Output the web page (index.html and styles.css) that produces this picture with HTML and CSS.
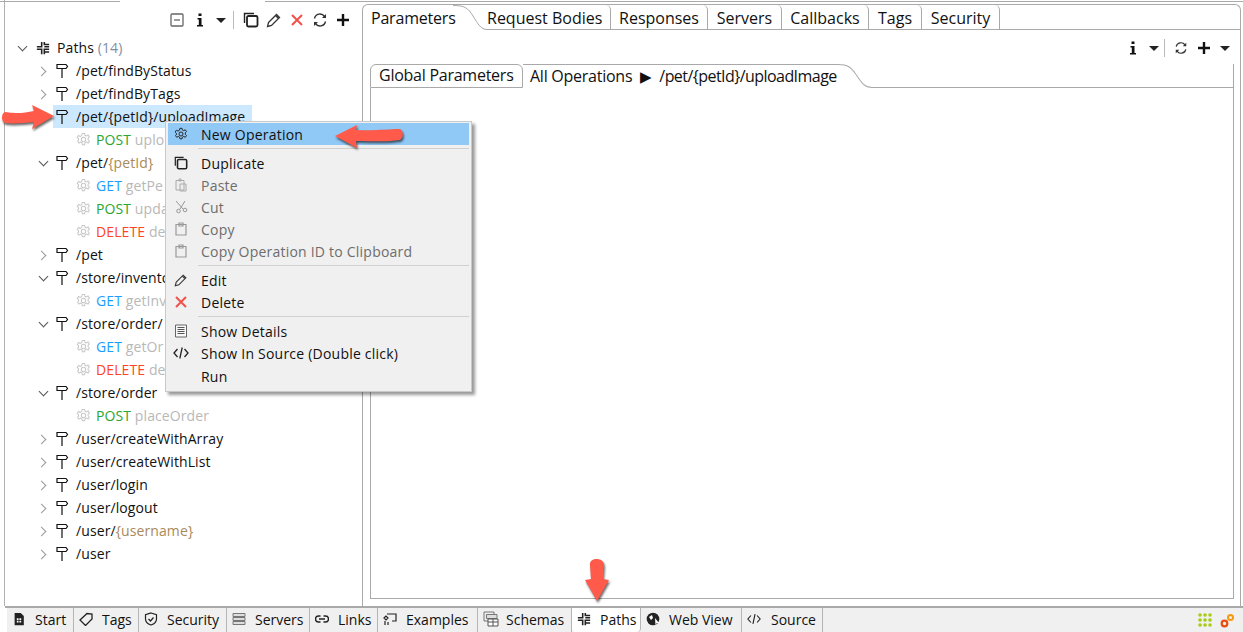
FILE: index.html
```html
<!DOCTYPE html>
<html lang="en">
<head>
<meta charset="utf-8">
<title>Paths</title>
<link rel="stylesheet" href="styles.css">
</head>
<body>
<svg class="defs" width="0" height="0" aria-hidden="true">
  <defs>
    <symbol id="sign" viewBox="0 0 14 16"><path d="M2 1.500h9l1.500 2-1.500 2H2zM7 5.500v9.500" fill="none" stroke="#111" stroke-width="1.200"/></symbol>
    <symbol id="gear" viewBox="0 0 16 16"><path d="M6.800 1.500h2.400l.4 2 1.500.7 1.800-1 1.400 2-1.400 1.400v1.800l1.400 1.400-1.400 2-1.800-1-1.500.7-.4 2H6.800l-.4-2-1.500-.7-1.800 1-1.400-2L2.700 8.900V7.100L1.300 5.700l1.400-2 1.800 1 1.500-.7z" fill="none" stroke="currentColor" stroke-width="1.100"/><circle cx="8" cy="8" r="2.300" fill="none" stroke="currentColor" stroke-width="1.100"/></symbol>
    <symbol id="copy" viewBox="0 0 16 16"><path d="M1.500 11V1.500H11" fill="none" stroke="#222" stroke-width="1.400"/><rect x="4" y="4" width="10.500" height="10.500" rx="1.500" fill="none" stroke="#222" stroke-width="1.800"/></symbol>
    <symbol id="pencil" viewBox="0 0 16 16"><path d="M2.500 10.500l8-8 3 3-8 8-4 1zM9.500 3.500l3 3" fill="none" stroke="#333" stroke-width="1.300"/></symbol>
    <symbol id="cross" viewBox="0 0 14 14"><path d="M2 2l10 10M12 2L2 12" fill="none" stroke="#f0524a" stroke-width="2"/></symbol>
    <symbol id="sync" viewBox="0 0 16 16"><path d="M2.500 6.500A5.500 5.500 0 0 1 12.500 4.500M13.500 9.500A5.500 5.500 0 0 1 3.500 11.500" fill="none" stroke="#333" stroke-width="1.400"/><path d="M14 2v4h-4zM2 14v-4h4z" fill="#333"/></symbol>
    <symbol id="plus" viewBox="0 0 14 14"><path d="M7 1v12M1 7h12" fill="none" stroke="#111" stroke-width="2.400"/></symbol>
    <symbol id="info" viewBox="0 0 8 14"><path d="M2.500 0.500h3v2.500h-3zM1.500 5h4v7h1.500v1.500H1v-1.500h1.800V6.500H1.500z" fill="#111"/></symbol>
    <symbol id="paths" viewBox="0 0 16 16"><path d="M6.500 1v5.500H1M9.500 1v3h5.500M9.500 6.500H15M1 9.500h5.500V15M9.500 15V9.500H15M15 12.500H9.500" fill="none" stroke="#222" stroke-width="1.800"/></symbol>
    <symbol id="code" viewBox="0 0 16 12"><path d="M4.500 2L1 6l3.500 4M11.500 2L15 6l-3.500 4M9.200 .5L6.800 11.500" fill="none" stroke="#222" stroke-width="1.300"/></symbol>
  </defs>
</svg>

<div class="edge-top"></div>
<div class="app">
  <div class="main">
    <section class="left">
      <div class="toolbar left-tools">
        <svg class="ic ic14" viewBox="0 0 14 14"><rect x="1" y="1" width="12" height="12" rx="1" fill="none" stroke="#666" stroke-width="1.300"/><path d="M4 7h6" stroke="#666" stroke-width="1.300"/></svg>
        <svg class="ic info"><use href="#info"/></svg>
        <span class="caret"></span>
        <span class="vsep"></span>
        <svg class="ic ic16"><use href="#copy"/></svg>
        <svg class="ic ic16"><use href="#pencil"/></svg>
        <svg class="ic ic14"><use href="#cross"/></svg>
        <svg class="ic ic16"><use href="#sync"/></svg>
        <svg class="ic ic14"><use href="#plus"/></svg>
      </div>
      <ul class="tree">
        <li class="row l0"><span class="chev down"></span><span class="node"><svg class="ic ic14"><use href="#paths"/></svg><span>Paths <span class="count">(14)</span></span></span></li>
        <li class="row l1"><span class="chev closed"></span><span class="node"><svg class="ic sign"><use href="#sign"/></svg><span>/pet/findByStatus</span></span></li>
        <li class="row l1"><span class="chev closed"></span><span class="node"><svg class="ic sign"><use href="#sign"/></svg><span>/pet/findByTags</span></span></li>
        <li class="row l1"><span class="chev"></span><span class="node selected"><svg class="ic sign"><use href="#sign"/></svg><span>/pet/{petId}/uploadImage</span></span></li>
        <li class="row l2"><span class="node"><svg class="ic gear"><use href="#gear"/></svg><span><span class="post">POST</span> <span class="op">uplo</span></span></span></li>
        <li class="row l1"><span class="chev down"></span><span class="node"><svg class="ic sign"><use href="#sign"/></svg><span>/pet/<span class="param">{petId}</span></span></span></li>
        <li class="row l2"><span class="node"><svg class="ic gear"><use href="#gear"/></svg><span><span class="get">GET</span> <span class="op">getPe</span></span></span></li>
        <li class="row l2"><span class="node"><svg class="ic gear"><use href="#gear"/></svg><span><span class="post">POST</span> <span class="op">upda</span></span></span></li>
        <li class="row l2"><span class="node"><svg class="ic gear"><use href="#gear"/></svg><span><span class="delete">DELETE</span> <span class="op">de</span></span></span></li>
        <li class="row l1"><span class="chev closed"></span><span class="node"><svg class="ic sign"><use href="#sign"/></svg><span>/pet</span></span></li>
        <li class="row l1"><span class="chev down"></span><span class="node"><svg class="ic sign"><use href="#sign"/></svg><span>/store/invento</span></span></li>
        <li class="row l2"><span class="node"><svg class="ic gear"><use href="#gear"/></svg><span><span class="get">GET</span> <span class="op">getInv</span></span></span></li>
        <li class="row l1"><span class="chev down"></span><span class="node"><svg class="ic sign"><use href="#sign"/></svg><span>/store/order/</span></span></li>
        <li class="row l2"><span class="node"><svg class="ic gear"><use href="#gear"/></svg><span><span class="get">GET</span> <span class="op">getOr</span></span></span></li>
        <li class="row l2"><span class="node"><svg class="ic gear"><use href="#gear"/></svg><span><span class="delete">DELETE</span> <span class="op">de</span></span></span></li>
        <li class="row l1"><span class="chev down"></span><span class="node"><svg class="ic sign"><use href="#sign"/></svg><span>/store/order</span></span></li>
        <li class="row l2"><span class="node"><svg class="ic gear"><use href="#gear"/></svg><span><span class="post">POST</span> <span class="op">placeOrder</span></span></span></li>
        <li class="row l1"><span class="chev closed"></span><span class="node"><svg class="ic sign"><use href="#sign"/></svg><span>/user/createWithArray</span></span></li>
        <li class="row l1"><span class="chev closed"></span><span class="node"><svg class="ic sign"><use href="#sign"/></svg><span>/user/createWithList</span></span></li>
        <li class="row l1"><span class="chev closed"></span><span class="node"><svg class="ic sign"><use href="#sign"/></svg><span>/user/login</span></span></li>
        <li class="row l1"><span class="chev closed"></span><span class="node"><svg class="ic sign"><use href="#sign"/></svg><span>/user/logout</span></span></li>
        <li class="row l1"><span class="chev closed"></span><span class="node"><svg class="ic sign"><use href="#sign"/></svg><span>/user/<span class="param">{username}</span></span></span></li>
        <li class="row l1"><span class="chev closed"></span><span class="node"><svg class="ic sign"><use href="#sign"/></svg><span>/user</span></span></li>
      </ul>
    </section>

    <section class="pane">
      <div class="tabs outer-tabs">
        <span class="tab active t-params">Parameters</span>
        <svg class="curve c-outer" viewBox="0 0 34 25" preserveAspectRatio="none"><path d="M0 .5C12 .5 15 3 20 11S28 24.500 34 24.500" fill="none" stroke="#a9a9a9"/></svg>
        <span class="tab t-req">Request Bodies</span>
        <span class="tab t-resp">Responses</span>
        <span class="tab t-serv">Servers</span>
        <span class="tab t-call">Callbacks</span>
        <span class="tab t-tags">Tags</span>
        <span class="tab t-sec">Security</span>
        <span class="tab-fill"></span>
      </div>
      <div class="toolbar right-tools">
        <svg class="ic info"><use href="#info"/></svg>
        <span class="caret"></span>
        <span class="vsep"></span>
        <svg class="ic ic14"><use href="#sync"/></svg>
        <svg class="ic ic14"><use href="#plus"/></svg>
        <span class="caret"></span>
      </div>
      <div class="inner">
        <div class="inner-tabs">
          <span class="itab">Global Parameters</span>
          <span class="itab active">All Operations<span class="tri">&#9654;</span><span class="crumb">/pet/{petId}/uploadImage</span></span>
          <svg class="curve c-inner" viewBox="0 0 34 23" preserveAspectRatio="none"><path d="M0 .5C10 .5 13 3 18 10S26 22.500 34 22.500" fill="none" stroke="#a9a9a9"/></svg>
          <span class="itab-fill"></span>
        </div>
        <div class="inner-body"></div>
      </div>
    </section>
  </div>

  <nav class="bottom">
    <span class="btab b-start"><svg class="ic ic14" viewBox="0 0 14 16"><path d="M2 1h7l3.500 3.500V15H2z" fill="#222"/><path d="M4.500 7h2v2h-2zM7.500 7h2v2h-2zM4.500 10h2v2h-2zM7.500 10h2v2h-2z" fill="#fff"/></svg>Start</span>
    <span class="btab b-tags"><svg class="ic ic14" viewBox="0 0 14 14"><path d="M1 8l7-6.500 5 .5v5l-6.500 6.500z" fill="none" stroke="#222" stroke-width="1.300"/></svg>Tags</span>
    <span class="btab b-sec"><svg class="ic ic14" viewBox="0 0 14 14"><path d="M7 1l5.500 1.800V7c0 3-2.500 5-5.500 6-3-1-5.500-3-5.500-6V2.800z" fill="none" stroke="#222" stroke-width="1.200"/><path d="M4.500 7l2 2 3-3.500" fill="none" stroke="#222" stroke-width="1.200"/></svg>Security</span>
    <span class="btab b-serv"><svg class="ic ic14" viewBox="0 0 14 14"><path d="M1 1.500h12v3H1zM1 5.500h12v3H1zM1 9.500h12v3H1z" fill="#ddd" stroke="#777"/></svg>Servers</span>
    <span class="btab b-links"><svg class="ic ic14" viewBox="0 0 14 14"><path d="M5.500 4H3.500a3 3 0 0 0 0 6h2M8.500 4h2a3 3 0 0 1 0 6h-2M4 7h6" fill="none" stroke="#222" stroke-width="1.400"/></svg>Links</span>
    <span class="btab b-ex"><svg class="ic ic14" viewBox="0 0 14 14"><path d="M4 2h9v7H9M1 6l2-2 2 2-2 2zM2 9v4M5 10v3" fill="none" stroke="#222" stroke-width="1.200"/></svg>Examples</span>
    <span class="btab b-sch"><svg class="ic ic16b" viewBox="0 0 16 16"><path d="M1 1h10v9H1z" fill="#eee" stroke="#777"/><path d="M3.500 3.500H14v4H3.500z" fill="#ddd" stroke="#777"/><path d="M5 8h10v7H5zM5 11h10M10 8v7" fill="#fff" stroke="#555"/></svg>Schemas</span>
    <span class="btab b-paths on"><svg class="ic ic14"><use href="#paths"/></svg>Paths</span>
    <span class="btab b-web"><svg class="ic ic14" viewBox="0 0 14 14"><circle cx="7" cy="7" r="6.300" fill="#222"/><path d="M3 5l3-2 1 3-2 2zM9 6l4 5-2.500.3-1 2z" fill="#fff"/></svg>Web View</span>
    <span class="btab b-src"><svg class="ic ic14" viewBox="0 0 16 12"><use href="#code"/></svg>Source</span>
    <span class="status">
      <svg class="ic dots" viewBox="0 0 14 14"><g fill="#a6cc12"><circle cx="2" cy="2" r="1.800"/><circle cx="7" cy="2" r="1.800"/><circle cx="12" cy="2" r="1.800"/><circle cx="2" cy="7" r="1.800"/><circle cx="7" cy="7" r="1.800"/><circle cx="12" cy="7" r="1.800"/><circle cx="2" cy="12" r="1.800"/><circle cx="7" cy="12" r="1.800"/><circle cx="12" cy="12" r="1.800"/></g></svg>
      <svg class="ic gears" viewBox="0 0 15 15"><circle cx="10.500" cy="4.500" r="2.500" fill="none" stroke="#f59a10" stroke-width="2"/><circle cx="4.500" cy="10.500" r="2.800" fill="none" stroke="#e8500f" stroke-width="2.200"/></svg>
    </span>
  </nav>
</div>

<div class="menu">
  <div class="mi hot"><svg class="ic ic14 dark"><use href="#gear"/></svg>New Operation</div>
  <div class="msep"></div>
  <div class="mi"><svg class="ic ic14"><use href="#copy"/></svg>Duplicate</div>
  <div class="mi off"><svg class="ic ic14" viewBox="0 0 14 14"><path d="M2 2.500h8V12H2zM5 1h2v2H5zM6 6h6v7H6z" fill="#eee" stroke="#aaa"/></svg>Paste</div>
  <div class="mi off"><svg class="ic ic14" viewBox="0 0 14 14"><path d="M2 1l7 8M11 1L6 9" fill="none" stroke="#999"/><circle cx="4.500" cy="11" r="1.800" fill="none" stroke="#999"/><circle cx="11" cy="10" r="1.800" fill="none" stroke="#999"/></svg>Cut</div>
  <div class="mi off"><svg class="ic ic14" viewBox="0 0 14 14"><path d="M2 2.500h10V13H2zM5 1h4v3H5z" fill="none" stroke="#999" stroke-width="1.200"/></svg>Copy</div>
  <div class="mi off"><svg class="ic ic14" viewBox="0 0 14 14"><path d="M2 2.500h10V13H2zM5 1h4v3H5z" fill="none" stroke="#999" stroke-width="1.200"/></svg>Copy Operation ID to Clipboard</div>
  <div class="msep"></div>
  <div class="mi"><svg class="ic ic14"><use href="#pencil"/></svg>Edit</div>
  <div class="mi"><svg class="ic ic14"><use href="#cross"/></svg>Delete</div>
  <div class="msep"></div>
  <div class="mi"><svg class="ic ic14" viewBox="0 0 14 14"><path d="M1.500 1h11v12h-11z" fill="#f8f8f8" stroke="#666"/><path d="M3.500 3.500h7M3.500 5.500h7M3.500 7.500h7M3.500 9.500h7" stroke="#555"/></svg>Show Details</div>
  <div class="mi"><svg class="ic wide" viewBox="0 0 16 12"><use href="#code"/></svg>Show In Source (Double click)</div>
  <div class="mi tall"><span class="noicon"></span>Run</div>
</div>

<svg class="arrow a1" viewBox="0 0 56 28"><path d="M4 9C14 11 24 10 33 8L31 2 53 13 31 26 33 19C24 20 12 21 4 20 0 19 0 10 4 9z"/></svg>
<svg class="arrow a2" viewBox="0 0 70 28"><path d="M1 13L23 2 22 7C40 8 55 6 65 6 70 6 70 17 65 17 55 19 40 18 22 18L23 25z"/></svg>
<svg class="arrow a3" viewBox="0 0 28 44"><path d="M6 7C5-1 20-1 20 7L19 21 25 22 13 43 1 22 7 21z"/></svg>
</body>
</html>
```
FILE: styles.css
```css
* { box-sizing: border-box; }
html, body { margin: 0; padding: 0; }
body {
  width: 1243px; height: 632px; overflow: hidden; position: relative;
  background: #fff; color: #111;
  font-family: "Open Sans", "Noto Sans", sans-serif; font-size: 14px;
}
.defs { position: absolute; }
.ic { display: block; flex: none; }
.ic14 { width: 14px; height: 14px; }
.ic16 { width: 16px; height: 16px; }
.ic16b { width: 16px; height: 16px; }
.info { width: 8px; height: 14px; }
.sign { width: 14px; height: 16px; }
.gear { width: 15px; height: 15px; color: #c8c8c8; margin-right: -2px; }
.dark { color: #222; }

.edge-top { position: absolute; left: 0; top: 1px; width: 1243px; height: 1px; background: linear-gradient(90deg, #aaa 120px, transparent 120px, transparent 265px, #aaa 265px); }
.app { display: flex; flex-direction: column; height: 632px; padding-left: 4px; }
.main { display: flex; height: 606px; flex: none; }

/* left pane */
.left { width: 358px; border-left: 1px solid #b0b0b0; flex: none; }
.toolbar { display: flex; align-items: center; }
.left-tools { height: 36px; padding: 4px 12px 0 0; justify-content: flex-end; gap: 8px; }
.left-tools .info { margin: 0 4px; }
.left-tools .caret { margin-right: -1px; }
.left-tools .vsep + .ic { margin-left: 1px; margin-right: -1px; }
.caret { width: 0; height: 0; border-left: 5px solid transparent; border-right: 5px solid transparent; border-top: 5px solid #222; flex: none; }
.vsep { width: 1px; height: 18px; background: #bbb; flex: none; }
.tree { list-style: none; margin: 0; padding: 0; }
.row { display: flex; align-items: center; height: 23px; white-space: nowrap; letter-spacing: .1px; }
.l0 { padding-left: 10px; }
.l0 .node { margin-left: 2px; }
.l1 { padding-left: 31px; }
.l2 { padding-left: 70px; }
.chev { width: 14px; height: 14px; flex: none; position: relative; margin-right: 4px; }
.chev.closed::before, .chev.down::before { content: ""; position: absolute; width: 6px; height: 6px; border-right: 1.500px solid #999; border-bottom: 1.500px solid #999; }
.chev.closed::before { left: 2px; top: 4px; transform: rotate(-45deg); }
.chev.down::before { left: 4px; top: 2px; transform: rotate(45deg); border-color: #555; }
.node { display: flex; align-items: center; gap: 7px; height: 23px; padding: 0 1px; }
.selected { background: #cce8ff; width: 199px; margin-left: -1px; padding-left: 2px; overflow: hidden; }
.count { color: #7f8fa6; }
.param { color: #a98a58; }
.post { color: #2ea52e; }
.get { color: #1a9eff; }
.delete { color: #ff4422; }
.op { color: #b8b8b8; }

/* right pane */
.pane { flex: none; width: 879px; margin-top: 4px; border: 1px solid #a9a9a9; border-bottom: 0; border-radius: 6px 6px 0 0; display: flex; flex-direction: column; }
.tabs { display: flex; height: 25px; font-size: 16px; flex: none; }
.tab { display: flex; align-items: center; justify-content: center; padding-top: 1px; border-bottom: 1px solid #a9a9a9; border-right: 1px solid #a9a9a9; border-top-right-radius: 5px; white-space: nowrap; flex: none; }
.tab.active { border: 0; width: 90px; padding-left: 8px; justify-content: flex-start; letter-spacing: -.2px; }
.c-outer { width: 34px; height: 25px; flex: none; }
.t-req { width: 124px; justify-content: flex-start; }
.t-resp { width: 97px; }
.t-serv { width: 74px; }
.t-call { width: 87px; }
.t-tags { width: 53px; }
.t-sec { width: 78px; }
.tab-fill { flex: 1; border-bottom: 1px solid #a9a9a9; }
.right-tools { height: 34px; padding: 2px 10px 0 0; justify-content: flex-end; gap: 9px; flex: none; }
.right-tools .info + .caret { margin-left: 3px; margin-right: -4px; }
.inner { margin: 0 6px 0 7px; flex: 1; display: flex; flex-direction: column; height: 0; }
.inner-tabs { display: flex; height: 24px; flex: none; font-size: 16px; letter-spacing: -.25px; }
.itab { display: flex; align-items: center; white-space: nowrap; flex: none; border: 1px solid #a9a9a9; border-radius: 6px 6px 0 0; width: 153px; padding: 0 0 2px 8px; }
.itab.active { border-bottom: 0; border-right: 0; border-left: 0; border-radius: 0; width: 315px; padding-left: 7px; }
.tri { width: 27px; text-align: center; font-size: 15px; flex: none; }
.crumb { letter-spacing: -.55px; }
.c-inner { width: 34px; height: 24px; flex: none; }
.itab-fill { flex: 1; border-bottom: 1px solid #a9a9a9; position: relative; }
.itab-fill::before { content: ""; position: absolute; top: 0; left: 0; right: 0; height: 23px; border-right: 1px solid #a9a9a9; }
.inner-body { flex: 1; border: 1px solid #a9a9a9; border-top: 0; margin-bottom: 7px; }

/* bottom tabs */
.bottom { flex: 1; margin-left: 1px; display: flex; padding-left: 2px; background: linear-gradient(#fff,#fff) 0 0 / 2px 100% no-repeat, #f0f0f0; border-top: 2px solid #a9a9a9; white-space: nowrap; font-size: 14px; }
.btab { display: flex; align-items: center; flex: none; border-right: 1px solid #b5b5b5; padding: 0 0 2px 5px; gap: 9px; height: 24px; }
.b-start { width: 67px; }
.b-tags { width: 65px; }
.b-sec { width: 88px; }
.b-serv { width: 83px; }
.b-links { width: 68px; }
.b-ex { width: 100px; }
.b-sch { width: 94px; gap: 7px; }
.b-paths { width: 69px; }
.b-web { width: 101px; }
.b-src { width: 81px; gap: 10px; }
.on { background: #fff; border-radius: 0 0 4px 4px; }
.status { margin-left: auto; display: flex; gap: 8px; align-items: center; padding-right: 8px; height: 24px; }
.dots { width: 14px; height: 14px; }
.gears { width: 15px; height: 15px; }

/* menu */
.menu { position: absolute; left: 165px; top: 121px; width: 307px; height: 271px; background: #f0f0f0; border: 1px solid #c9c9c9; padding: 1px 2px; box-shadow: 3px 3px 3px rgba(0,0,0,.4); }
.mi { display: flex; align-items: center; height: 22px; padding-left: 6px; gap: 13px; white-space: nowrap; letter-spacing: .22px; }
.mi .ic { width: 14px; }
.mi .wide { width: 16px; height: 12px; margin: 0 -1px 0 -1px; }
.hot { background: #90c8f6; }
.off { color: #6d6d6d; }
.tall { height: 24px; }
.noicon { width: 14px; flex: none; }
.msep { height: 7px; margin-left: 30px; position: relative; }
.msep::after { content: ""; position: absolute; left: 0; right: 0; top: 3px; height: 1px; background: #d0d0d0; }

/* arrows */
.arrow { position: absolute; fill: #ff5a4a; filter: drop-shadow(1px 2px 1px rgba(0,0,0,.6)); }
.a1 { left: 1px; top: 103px; width: 56px; height: 28px; }
.a2 { left: 334px; top: 123px; width: 70px; height: 28px; }
.a3 { left: 584px; top: 558px; width: 28px; height: 44px; }
```
